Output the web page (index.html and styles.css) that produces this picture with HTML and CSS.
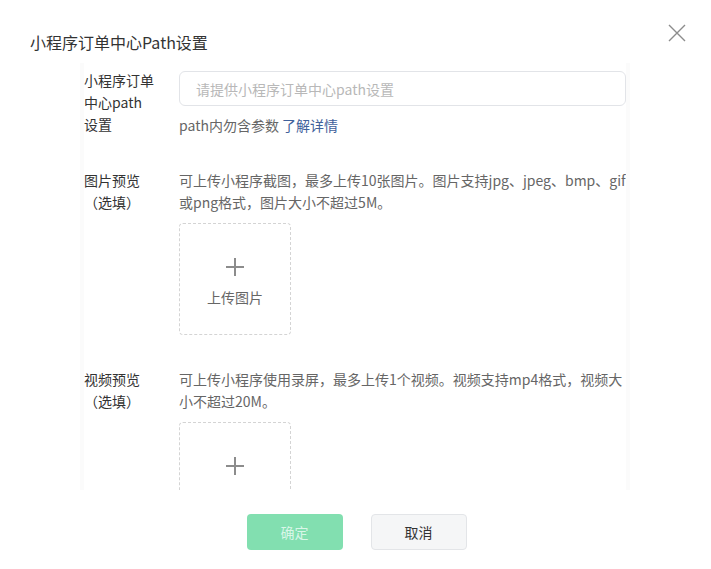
FILE: index.html
```html
<!DOCTYPE html>
<html lang="zh-CN">
  <head>
    <meta charset="UTF-8" />
    <title>小程序订单中心Path设置</title>
    <link rel="stylesheet" href="styles.css">
  </head>
  <body>
    <div class="dialog">
      <div class="dialog_head">
        <h3 class="dialog_title">小程序订单中心Path设置</h3>
        <button class="close_btn">
          <svg width="18" height="18" viewBox="0 0 18 18">
            <path d="M1 1L17 17M17 1L1 17" stroke="#8c8c8c" stroke-width="1.4" fill="none" />
          </svg>
        </button>
      </div>

      <div class="dialog_body">
        <div class="form_row">
          <div class="form_label">小程序订单中心path<br />设置</div>
          <div class="form_ctrl">
            <input type="text" class="path_input" placeholder="请提供小程序订单中心path设置" />
            <p class="hint">path内勿含参数 <a href="#" class="link">了解详情</a></p>
          </div>
        </div>

        <div class="form_row">
          <div class="form_label">图片预览<br />（选填）</div>
          <div class="form_ctrl">
            <p class="desc">可上传小程序截图，最多上传10张图片。图片支持jpg、jpeg、bmp、gif或png格式，图片大小不超过5M。</p>
            <div class="upload_box">
              <span class="plus"></span>
              <span class="upload_text">上传图片</span>
            </div>
          </div>
        </div>

        <div class="form_row">
          <div class="form_label">视频预览<br />（选填）</div>
          <div class="form_ctrl">
            <p class="desc">可上传小程序使用录屏，最多上传1个视频。视频支持mp4格式，视频大小不超过20M。</p>
            <div class="upload_box">
              <span class="plus"></span>
              <span class="upload_text">上传视频</span>
            </div>
          </div>
        </div>
      </div>

      <div class="dialog_foot">
        <button class="btn btn_primary" disabled>确定</button>
        <button class="btn btn_default">取消</button>
      </div>
    </div>
  </body>
</html>
```

FILE: styles.css
```css
body {
  margin: 0;
  background: #fff;
  font-family: "Microsoft YaHei", "Noto Sans CJK SC", sans-serif;
  color: #333;
}
.dialog {
  position: relative;
  width: 711px;
  height: 569px;
}
.dialog_head {
  height: 63px;
  padding: 0 30px;
  box-sizing: border-box;
}
.dialog_title {
  margin: 0;
  padding-top: 30px;
  font-size: 16px;
  font-weight: normal;
  line-height: 24px;
  color: #333;
}
.close_btn {
  position: absolute;
  top: 24px;
  right: 25px;
  width: 18px;
  height: 18px;
  padding: 0;
  border: none;
  background: none;
  cursor: pointer;
}
.close_btn svg {
  display: block;
}
.dialog_body {
  margin-left: 80px;
  width: 542px;
  height: 421px;
  padding-top: 6px;
  border-left: 4px solid #fbfbfb;
  border-right: 4px solid #fbfbfb;
  overflow: hidden;
}
.form_row {
  display: flex;
  margin-bottom: 33px;
  font-size: 14px;
  line-height: 22px;
}
.form_label {
  width: 95px;
  flex-shrink: 0;
  padding-right: 25px;
  box-sizing: border-box;
  color: #333;
}
.form_ctrl {
  width: 447px;
}
.path_input {
  display: block;
  width: 100%;
  height: 35px;
  margin-top: 2px;
  padding: 0 16px;
  box-sizing: border-box;
  border: 1px solid #e2e4e8;
  border-radius: 6px;
  outline: 0;
  font-family: inherit;
  font-size: 14px;
  color: #333;
}
.path_input::placeholder {
  color: #b8b8b8;
}
.hint {
  margin: 8px 0 0;
  color: #666;
}
.link {
  color: #3f619b;
  text-decoration: none;
}
.desc {
  margin: 0;
  color: #666;
  word-break: break-all;
}
.upload_box {
  display: flex;
  flex-direction: column;
  align-items: center;
  width: 112px;
  height: 112px;
  margin-top: 10px;
  padding-top: 34px;
  box-sizing: border-box;
  border: 1px dashed #d4d4d4;
  border-radius: 4px;
}
.plus {
  position: relative;
  width: 18px;
  height: 18px;
}
.plus::before,
.plus::after {
  content: "";
  position: absolute;
  background: #8c8c8c;
}
.plus::before {
  left: 0;
  top: 8px;
  width: 18px;
  height: 1.5px;
}
.plus::after {
  left: 8px;
  top: 0;
  width: 1.5px;
  height: 18px;
}
.upload_text {
  margin-top: 10px;
  line-height: 22px;
  color: #666;
}
.dialog_foot {
  display: flex;
  justify-content: center;
  gap: 28px;
  padding-top: 24px;
  padding-left: 2px;
}
.btn {
  width: 96px;
  height: 36px;
  border-radius: 4px;
  font-family: inherit;
  font-size: 14px;
  cursor: pointer;
}
.btn_primary {
  border: none;
  background: #82dfb0;
  color: #d9f6e8;
}
.btn_default {
  border: 1px solid #e3e5e8;
  background: #f5f6f7;
  color: #333;
}
```
